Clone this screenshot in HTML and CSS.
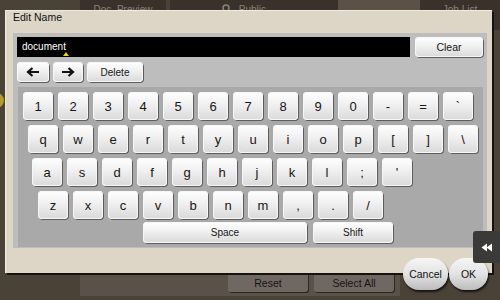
FILE: index.html
```html
<!DOCTYPE html>
<html lang="en">
<head>
    <meta charset="UTF-8">
    <title>Edit Name</title>
    <link rel="stylesheet" href="styles.css">
</head>
<body>
    <div class="screen">
        <div class="tabs">
            <div class="tab tab-doc">Doc. Preview</div>
            <div class="tab tab-public">
                <svg class="search-icon" width="10" height="10" viewBox="0 0 10 10">
                    <circle cx="4" cy="4" r="3" fill="none" stroke="#8c8279" stroke-width="1.5"/>
                    <path d="M6.2 6.2L9 9" stroke="#8c8279" stroke-width="1.8"/>
                </svg>
                Public
            </div>
            <div class="tab tab-active"></div>
            <div class="tab tab-jobs">Job List</div>
        </div>
        <div class="work">
            <div class="status-dot"></div>
        </div>
        <div class="footer">
            <div class="footer-btn">Reset</div>
            <div class="footer-btn">Select All</div>
        </div>

        <div class="dialog">
            <div class="dialog-title">Edit Name</div>
            <div class="panel">
                <div class="entry-row">
                    <div class="entry">document<span class="caret"></span></div>
                    <div class="button clear">Clear</div>
                </div>
                <div class="edit-row">
                    <div class="button arrow-left">
                        <svg width="14" height="10" viewBox="0 0 14 10"><path d="M13 5H2.5 M6.5 1L2 5L6.5 9" fill="none" stroke="#111" stroke-width="2.2"/></svg>
                    </div>
                    <div class="button arrow-right">
                        <svg width="14" height="10" viewBox="0 0 14 10"><path d="M1 5H11.5 M7.5 1L12 5L7.5 9" fill="none" stroke="#111" stroke-width="2.2"/></svg>
                    </div>
                    <div class="button delete">Delete</div>
                </div>
                <div class="keyboard">
                    <div class="key-row row-1">
                        <div class="key">1</div><div class="key">2</div><div class="key">3</div><div class="key">4</div>
                        <div class="key">5</div><div class="key">6</div><div class="key">7</div><div class="key">8</div>
                        <div class="key">9</div><div class="key">0</div><div class="key">-</div><div class="key">=</div>
                        <div class="key">`</div>
                    </div>
                    <div class="key-row row-2">
                        <div class="key">q</div><div class="key">w</div><div class="key">e</div><div class="key">r</div>
                        <div class="key">t</div><div class="key">y</div><div class="key">u</div><div class="key">i</div>
                        <div class="key">o</div><div class="key">p</div><div class="key">[</div><div class="key">]</div>
                        <div class="key">\</div>
                    </div>
                    <div class="key-row row-3">
                        <div class="key">a</div><div class="key">s</div><div class="key">d</div><div class="key">f</div>
                        <div class="key">g</div><div class="key">h</div><div class="key">j</div><div class="key">k</div>
                        <div class="key">l</div><div class="key">;</div><div class="key">'</div>
                    </div>
                    <div class="key-row row-4">
                        <div class="key">z</div><div class="key">x</div><div class="key">c</div><div class="key">v</div>
                        <div class="key">b</div><div class="key">n</div><div class="key">m</div><div class="key">,</div>
                        <div class="key">.</div><div class="key">/</div>
                    </div>
                    <div class="key-row row-5">
                        <div class="key space">Space</div>
                        <div class="key shift">Shift</div>
                    </div>
                </div>
            </div>
        </div>

        <div class="pill cancel">Cancel</div>
        <div class="pill ok">OK</div>

        <div class="side-tab">
            <svg width="12" height="9" viewBox="0 0 12 9">
                <polygon points="0.5,4.5 6,0.5 6,8.5" fill="#fff"/>
                <polygon points="5.5,4.5 11,0.5 11,8.5" fill="#fff"/>
            </svg>
        </div>
    </div>
</body>
</html>
```

FILE: styles.css
```css
* {
    box-sizing: border-box;
}

body {
    margin: 0;
    background: #4a4137;
    font-family: 'Liberation Sans', Arial, sans-serif;
}

.screen {
    position: relative;
    width: 500px;
    height: 300px;
    overflow: hidden;
    display: flex;
    flex-direction: column;
}

/* background screen */

.tabs {
    display: flex;
    height: 30px;
    padding-left: 80px;
}

.tab {
    height: 30px;
    padding-top: 4px;
    background: #3b312b;
    color: #8c8279;
    font-size: 10px;
    text-align: center;
}

.tab-doc {
    width: 86px;
    margin-right: 4px;
}

.tab-public {
    width: 168px;
    padding-left: 52px;
    text-align: left;
}

.search-icon {
    vertical-align: -1px;
    margin-right: 4px;
}

.tab-active {
    width: 82px;
    background: #5b5147;
}

.tab-jobs {
    width: 80px;
}

.work {
    flex: 1;
    position: relative;
}

.status-dot {
    position: absolute;
    left: -11px;
    top: 63px;
    width: 15px;
    height: 15px;
    border-radius: 50%;
    background: #b39a2c;
}

.footer {
    display: flex;
    gap: 6px;
    width: 320px;
    height: 23px;
    margin: 0 0 4px 80px;
    padding-left: 148px;
    background: #5a5148;
}

.footer-btn {
    width: 80px;
    height: 19px;
    padding-top: 4px;
    border-radius: 0 0 3px 3px;
    background: #6f6862;
    box-shadow: 1px 1px 0 #2b2622;
    color: #141414;
    font-size: 10.5px;
    text-align: center;
}

/* dialog */

.dialog {
    position: absolute;
    left: 5px;
    top: 10px;
    width: 487px;
    height: 263px;
    background: #ddd5c5;
    border-top: 1px solid #f1ece2;
    border-left: 1px solid #f1ece2;
    box-shadow: 2px 2px 0 #16120f;
}

.dialog-title {
    height: 22px;
    padding-left: 7px;
    line-height: 12px;
    font-size: 10.5px;
    color: #111;
}

.panel {
    width: 474px;
    height: 215px;
    margin-left: 7px;
    padding: 4px 4px 0 4px;
    background: #bdbdbd;
}

.entry-row,
.edit-row {
    display: flex;
    height: 20px;
}

.entry-row {
    gap: 5px;
}

.edit-row {
    gap: 4px;
    margin-top: 5px;
}

.entry {
    position: relative;
    width: 393px;
    padding-left: 5px;
    background: #000;
    color: #fff;
    font-size: 10px;
    line-height: 20px;
}

.caret {
    position: absolute;
    left: 46px;
    bottom: 1px;
    border-left: 3px solid transparent;
    border-right: 3px solid transparent;
    border-bottom: 4px solid #f2d100;
}

.button,
.key {
    display: flex;
    align-items: center;
    justify-content: center;
    border-radius: 4px;
    background: linear-gradient(#ffffff, #f0f0f0 45%, #d9d9d9);
    box-shadow: 1px 1px 0 #5c5c5c, inset 0 0 0 1px #f7f7f7;
    color: #161616;
    font-size: 10px;
}

.clear {
    width: 68px;
    font-size: 10.5px;
}

.arrow-left {
    width: 32px;
}

.arrow-right {
    width: 30px;
}

.delete {
    width: 56px;
}

.keyboard {
    display: flex;
    flex-direction: column;
    gap: 5px;
    width: 465px;
    height: 160px;
    margin: 5px 0 0 1px;
    padding: 5px 0 0 5px;
    background: #a9a9a9;
}

.key-row {
    display: flex;
    gap: 5px;
}

.key {
    width: 30px;
    height: 28px;
    font-size: 13px;
}

.row-2 {
    padding-left: 5px;
}

.row-3 {
    padding-left: 9px;
}

.row-4 {
    padding-left: 15px;
}

.row-5 {
    gap: 6px;
    margin-top: -2px;
    padding-left: 120px;
}

.row-5 .key {
    height: 21px;
    font-size: 10px;
}

.space {
    width: 164px;
}

.key.shift {
    width: 80px;
}

/* action buttons */

.pill {
    position: absolute;
    top: 258px;
    height: 32px;
    display: flex;
    align-items: center;
    justify-content: center;
    border-radius: 16px;
    background: linear-gradient(#f6f6f6, #e3e3e3 50%, #bcbcbc);
    box-shadow: 1px 2px 2px rgba(0, 0, 0, 0.7);
    color: #111;
    font-size: 10.5px;
}

.cancel {
    left: 403px;
    width: 45px;
}

.ok {
    left: 449px;
    width: 39px;
}

.side-tab {
    position: absolute;
    right: 0;
    top: 231px;
    width: 27px;
    height: 32px;
    display: flex;
    align-items: center;
    justify-content: center;
    border-radius: 3px 0 0 3px;
    background: #3c3a38;
}
```
